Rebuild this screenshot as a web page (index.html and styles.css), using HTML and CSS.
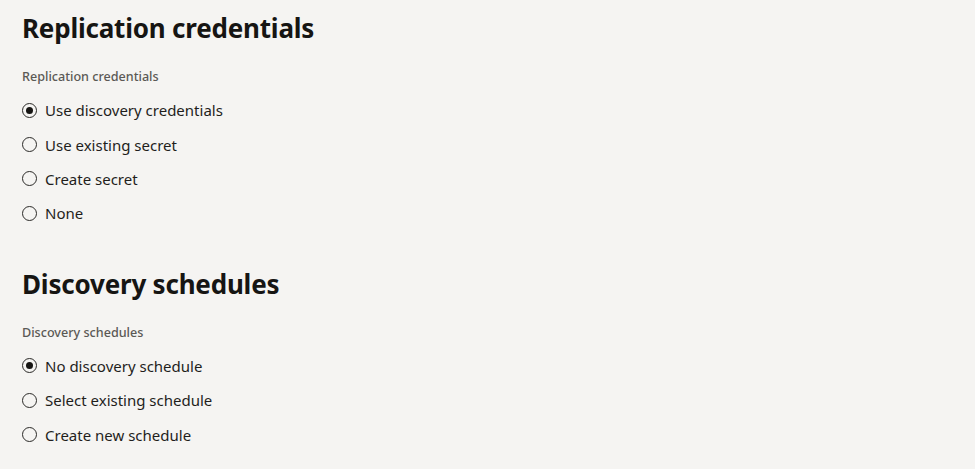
FILE: index.html
```html
<!DOCTYPE html>
<html lang="en">
<head>
<meta charset="utf-8">
<title>Credentials</title>
<link rel="stylesheet" href="styles.css">
</head>
<body>
<main class="page">
  <section class="section">
    <h2 class="heading">Replication credentials</h2>
    <div class="group" role="radiogroup" aria-label="Replication credentials">
      <div class="label">Replication credentials</div>
      <label class="option"><span class="radio checked"></span><span>Use discovery credentials</span></label>
      <label class="option"><span class="radio"></span><span>Use existing secret</span></label>
      <label class="option"><span class="radio"></span><span>Create secret</span></label>
      <label class="option"><span class="radio"></span><span>None</span></label>
    </div>
  </section>
  <section class="section">
    <h2 class="heading">Discovery schedules</h2>
    <div class="group" role="radiogroup" aria-label="Discovery schedules">
      <div class="label">Discovery schedules</div>
      <label class="option"><span class="radio checked"></span><span>No discovery schedule</span></label>
      <label class="option"><span class="radio"></span><span>Select existing schedule</span></label>
      <label class="option"><span class="radio"></span><span>Create new schedule</span></label>
    </div>
  </section>
</main>
</body>
</html>
```
FILE: styles.css
```css
html, body {
  margin: 0;
  padding: 0;
  background: #f5f4f2;
}
body {
  font-family: "Noto Sans", "Open Sans", sans-serif;
  color: #161513;
}
.page {
  padding: 11px 22px 0;
  display: flex;
  flex-direction: column;
  gap: 36px;
}
.section {
  display: flex;
  flex-direction: column;
}
.heading {
  margin: 0;
  font-size: 26px;
  font-weight: 700;
  line-height: 34px;
  letter-spacing: -0.2px;
}
.group {
  display: flex;
  flex-direction: column;
}
.label {
  margin: 24px 0 8px;
  font-size: 12.6px;
  font-weight: 500;
  color: #5b5955;
  line-height: 16px;
}
.option {
  display: flex;
  align-items: center;
  gap: 8px;
  height: 34.4px;
  font-size: 15px;
  color: #1f1e1c;
}
.radio {
  box-sizing: border-box;
  width: 15px;
  height: 15px;
  border: 1.7px solid #2b2a28;
  border-radius: 50%;
  display: inline-flex;
  align-items: center;
  justify-content: center;
}
.radio.checked::after {
  content: "";
  width: 7px;
  height: 7px;
  border-radius: 50%;
  background: #161513;
}
```
